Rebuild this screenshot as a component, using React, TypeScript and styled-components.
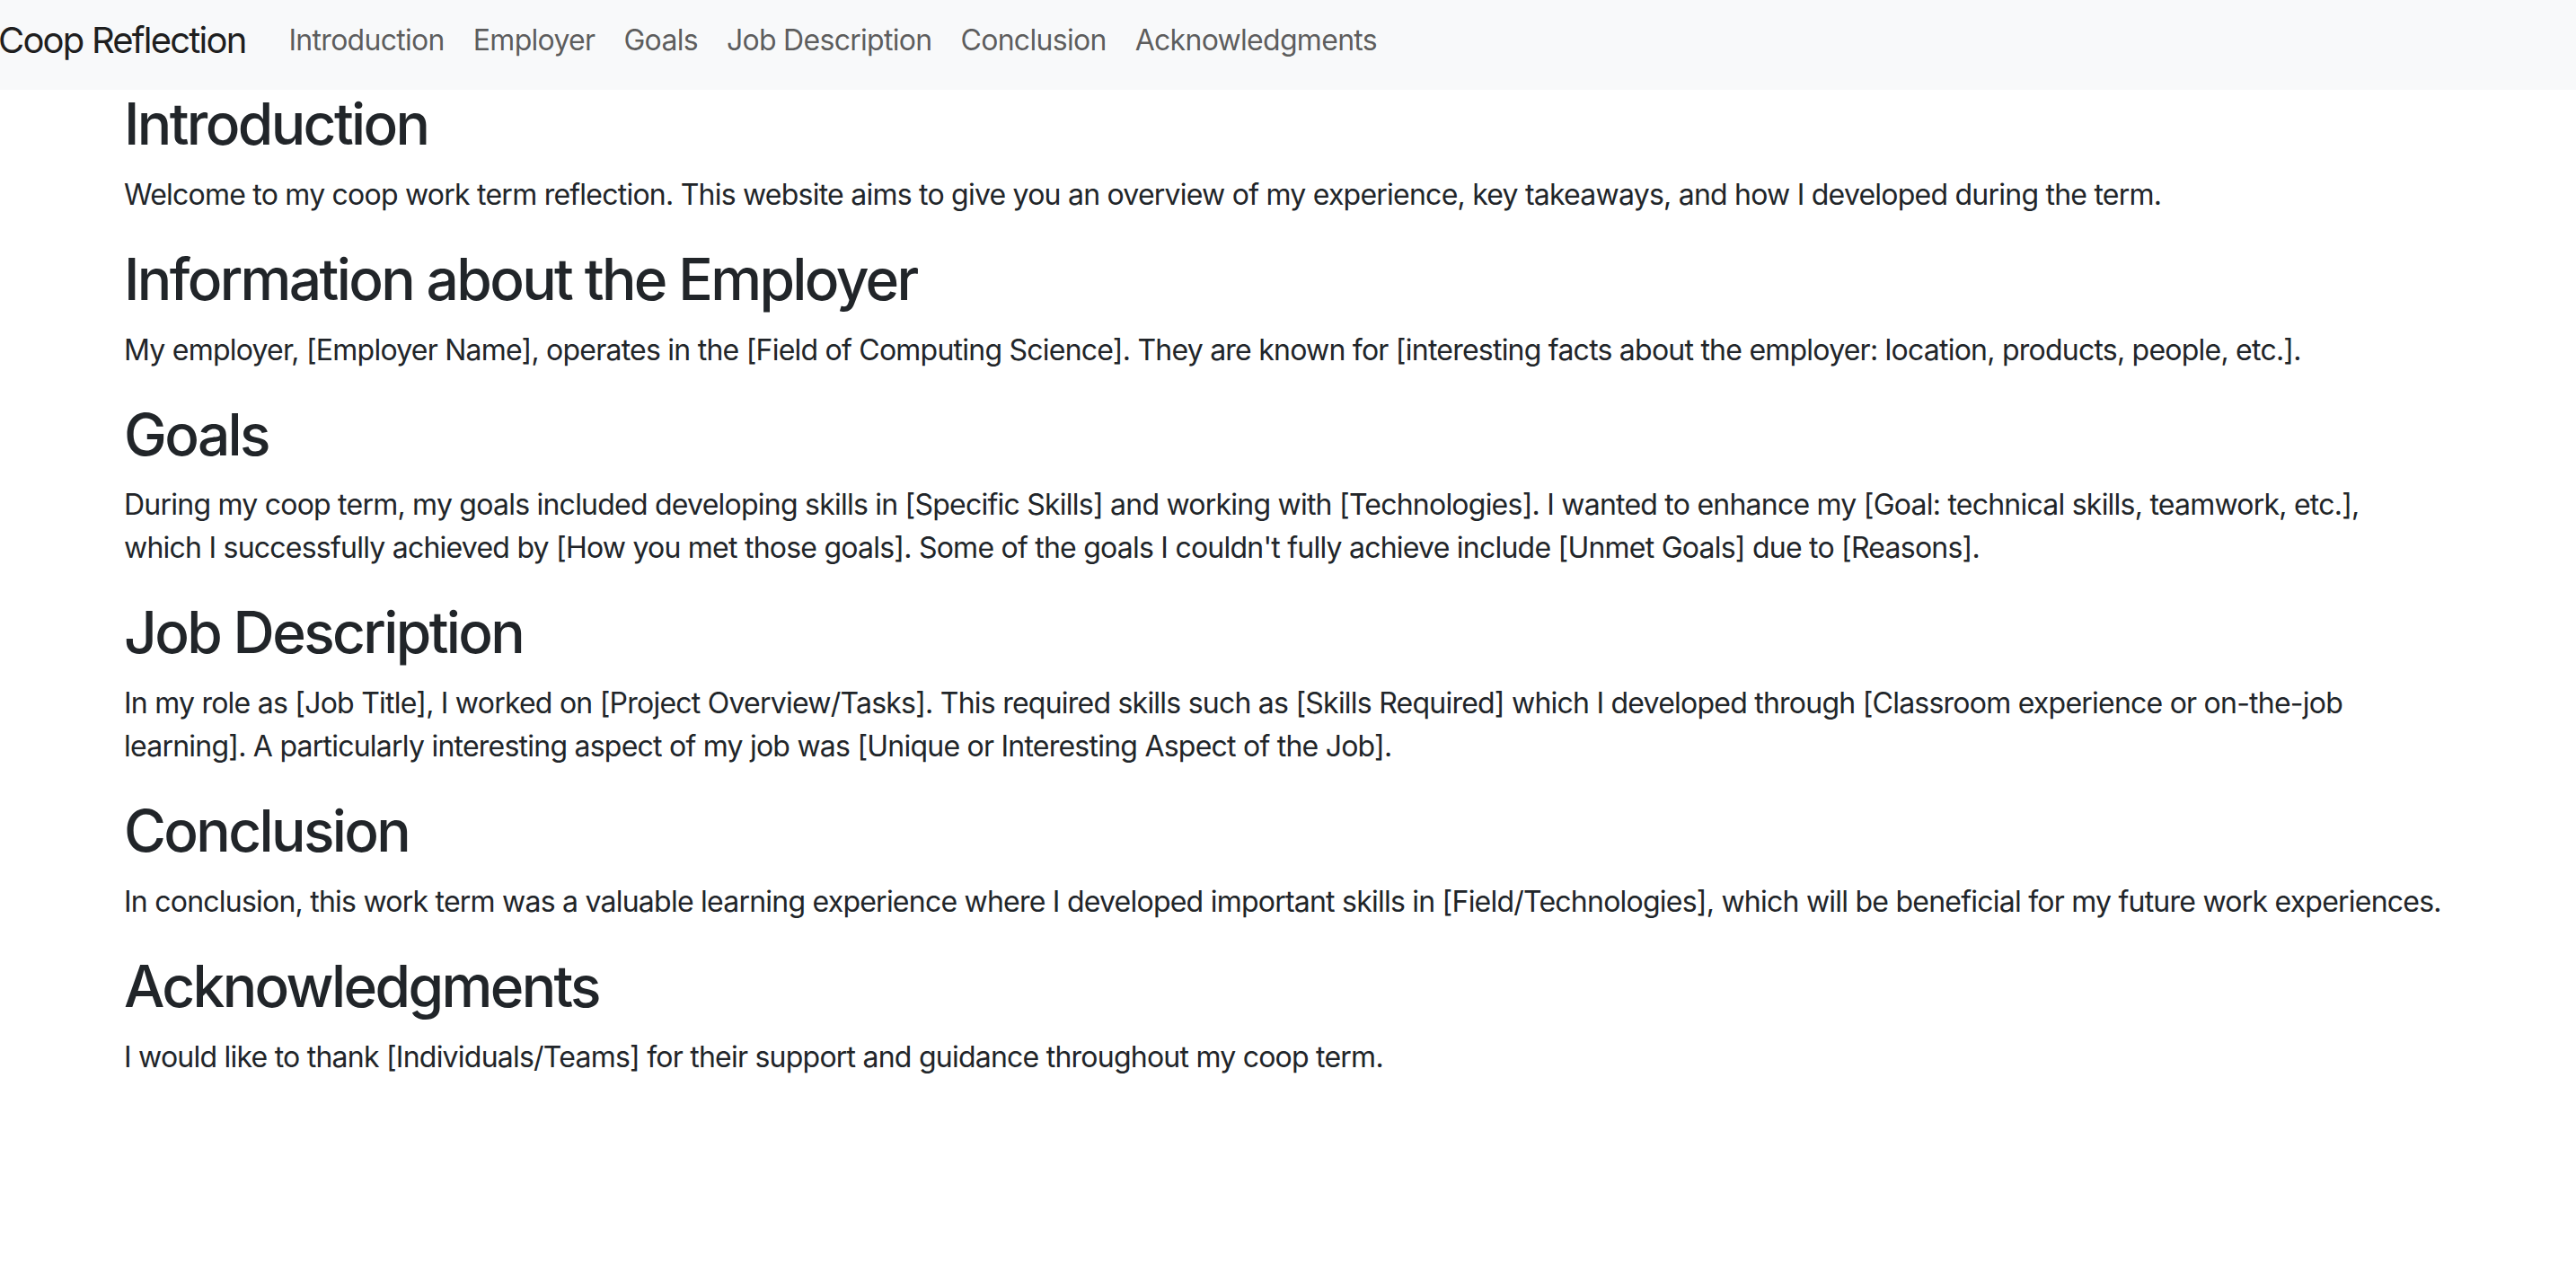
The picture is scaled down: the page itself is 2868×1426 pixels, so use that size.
import React from "react";
import styled, { createGlobalStyle } from "styled-components";

const GlobalStyle = createGlobalStyle`
  *, *::before, *::after { box-sizing: border-box; }
  html, body { margin: 0; padding: 0; background: #ffffff; }
  body {
    font-family: Inter, "Noto Sans", "Liberation Sans", sans-serif;
    font-size: 32px;
    line-height: 1.5;
    color: #212529;
    -webkit-font-smoothing: antialiased;
  }
`;

const NavBar = styled.nav`
  background: #f8f9fa;
  height: 100px;
  display: flex;
  align-items: center;
  padding: 0 0 10px 0;
`;

const Brand = styled.a`
  font-size: 40px;
  line-height: 60px;
  letter-spacing: -0.045em;
  color: rgba(0, 0, 0, 0.9);
  text-decoration: none;
  margin-left: -2px;
  margin-right: 32px;
  white-space: nowrap;
`;

const NavList = styled.ul`
  display: flex;
  list-style: none;
  margin: 0;
  padding: 0;
`;

const NavLink = styled.a`
  display: block;
  padding: 8px 16px;
  font-size: 32px;
  line-height: 48px;
  letter-spacing: -0.022em;
  color: rgba(0, 0, 0, 0.65);
  text-decoration: none;
  white-space: nowrap;
`;

const Container = styled.main`
  width: 2640px;
  margin: 0 auto;
  padding: 0 24px;
`;

const Section = styled.section``;

const Heading = styled.h2`
  font-size: 64px;
  font-weight: 500;
  line-height: 1.2;
  letter-spacing: -0.041em;
  margin: 0 0 16px 0;
  color: #212529;
`;

const Para = styled.p`
  margin: 0 0 32px 0;
  font-size: 32px;
  line-height: 48px;
  letter-spacing: -0.024em;
`;

const links = [
  "Introduction",
  "Employer",
  "Goals",
  "Job Description",
  "Conclusion",
  "Acknowledgments",
];

const sections: { title: string; lines: string[] }[] = [
  {
    title: "Introduction",
    lines: [
      "Welcome to my coop work term reflection. This website aims to give you an overview of my experience, key takeaways, and how I developed during the term.",
    ],
  },
  {
    title: "Information about the Employer",
    lines: [
      "My employer, [Employer Name], operates in the [Field of Computing Science]. They are known for [interesting facts about the employer: location, products, people, etc.].",
    ],
  },
  {
    title: "Goals",
    lines: [
      "During my coop term, my goals included developing skills in [Specific Skills] and working with [Technologies]. I wanted to enhance my [Goal: technical skills, teamwork, etc.],",
      "which I successfully achieved by [How you met those goals]. Some of the goals I couldn't fully achieve include [Unmet Goals] due to [Reasons].",
    ],
  },
  {
    title: "Job Description",
    lines: [
      "In my role as [Job Title], I worked on [Project Overview/Tasks]. This required skills such as [Skills Required] which I developed through [Classroom experience or on-the-job learning]. A particularly interesting aspect of my job was [Unique or Interesting Aspect of the Job].",
    ],
  },
  {
    title: "Conclusion",
    lines: [
      "In conclusion, this work term was a valuable learning experience where I developed important skills in [Field/Technologies], which will be beneficial for my future work experiences.",
    ],
  },
  {
    title: "Acknowledgments",
    lines: [
      "I would like to thank [Individuals/Teams] for their support and guidance throughout my coop term.",
    ],
  },
];

export default function App() {
  return (
    <>
      <GlobalStyle />
      <NavBar>
        <Brand href="#">Coop Reflection</Brand>
        <NavList>
          {links.map((l) => (
            <li key={l}>
              <NavLink href="#">{l}</NavLink>
            </li>
          ))}
        </NavList>
      </NavBar>
      <Container>
        {sections.map((s) => (
          <Section key={s.title}>
            <Heading>{s.title}</Heading>
            <Para>
              {s.lines.map((line, i) => (
                <React.Fragment key={i}>
                  {i > 0 && <br />}
                  {line}
                </React.Fragment>
              ))}
            </Para>
          </Section>
        ))}
      </Container>
    </>
  );
}
